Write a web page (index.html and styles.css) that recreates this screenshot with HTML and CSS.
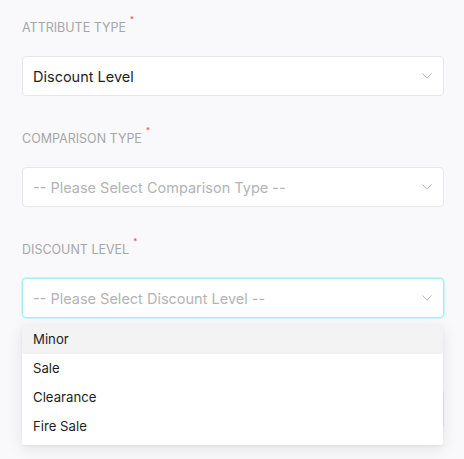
FILE: index.html
```html
<!DOCTYPE html>
<html>
<head>
<meta charset="utf-8">
<link rel="stylesheet" href="styles.css">
</head>
<body>
<div class="form">
  <div class="field">
    <label class="label">ATTRIBUTE TYPE<span class="req">*</span></label>
    <div class="select"><span class="value">Discount Level</span><svg class="chev" width="10" height="6" viewBox="0 0 10 6"><polyline points="0.5,0.5 5,5.2 9.5,0.5" fill="none" stroke="#b5b5b5" stroke-width="1"/></svg></div>
  </div>
  <div class="field">
    <label class="label">COMPARISON TYPE<span class="req">*</span></label>
    <div class="select"><span class="placeholder">-- Please Select Comparison Type --</span><svg class="chev" width="10" height="6" viewBox="0 0 10 6"><polyline points="0.5,0.5 5,5.2 9.5,0.5" fill="none" stroke="#b5b5b5" stroke-width="1"/></svg></div>
  </div>
  <div class="field dd-field">
    <label class="label">DISCOUNT LEVEL<span class="req">*</span></label>
    <div class="select focused"><span class="placeholder">-- Please Select Discount Level --</span><svg class="chev" width="10" height="6" viewBox="0 0 10 6"><polyline points="0.5,0.5 5,5.2 9.5,0.5" fill="none" stroke="#b5b5b5" stroke-width="1"/></svg></div>
    <ul class="menu">
      <li class="item active">Minor</li>
      <li class="item">Sale</li>
      <li class="item">Clearance</li>
      <li class="item">Fire Sale</li>
    </ul>
  </div>
  <div class="field">
    <div class="label"></div>
    <div class="select"></div>
  </div>
  <div class="field">
    <label class="label">VALUE<span class="req">*</span></label>
  </div>
</div>
</body>
</html>
```
FILE: styles.css
```css
html, body {
  margin: 0;
  padding: 0;
  background: #f9f9fb;
  font-family: Inter, "Noto Sans", sans-serif;
  overflow: hidden;
}
.form {
  padding: 18px 20px 0 22px;
  display: flex;
  flex-direction: column;
  gap: 33px;
}
.field {
  display: flex;
  flex-direction: column;
  gap: 18px;
}
.dd-field {
  position: relative;
  z-index: 2;
}
.label {
  display: block;
  height: 20px;
  line-height: 20px;
  font-size: 12.5px;
  color: #a6a6a8;
}
.req {
  color: #f04444;
  font-size: 8px;
  vertical-align: 10px;
  margin-left: 4px;
  line-height: 0;
}
.select {
  box-sizing: border-box;
  height: 40px;
  background: #fff;
  border: 1px solid #e7e7ea;
  border-radius: 4px;
  display: flex;
  align-items: center;
  padding: 0 11px 0 10px;
  font-size: 14.5px;
}
.select.focused {
  border-color: #a3ecf8;
  box-shadow: 0 0 0 1px #c9f5fc;
}
.value {
  flex: 1;
  color: #1e1e22;
}
.placeholder {
  flex: 1;
  color: #b3b3b6;
}
.chev {
  display: block;
  flex: none;
  margin-left: auto;
}
.menu {
  position: absolute;
  left: 0;
  right: 1px;
  top: 85px;
  margin: 0;
  padding: 0 0 4px;
  list-style: none;
  background: #fff;
  border-radius: 2px;
  box-shadow: 0 4px 16px rgba(20, 20, 40, 0.09), 0 1px 3px rgba(0,0,0,0.06);
}
.item {
  height: 29px;
  line-height: 29px;
  padding: 0 11px;
  font-size: 13.2px;
  color: #1e1e22;
}
.item.active {
  background: #f3f3f4;
}
```
